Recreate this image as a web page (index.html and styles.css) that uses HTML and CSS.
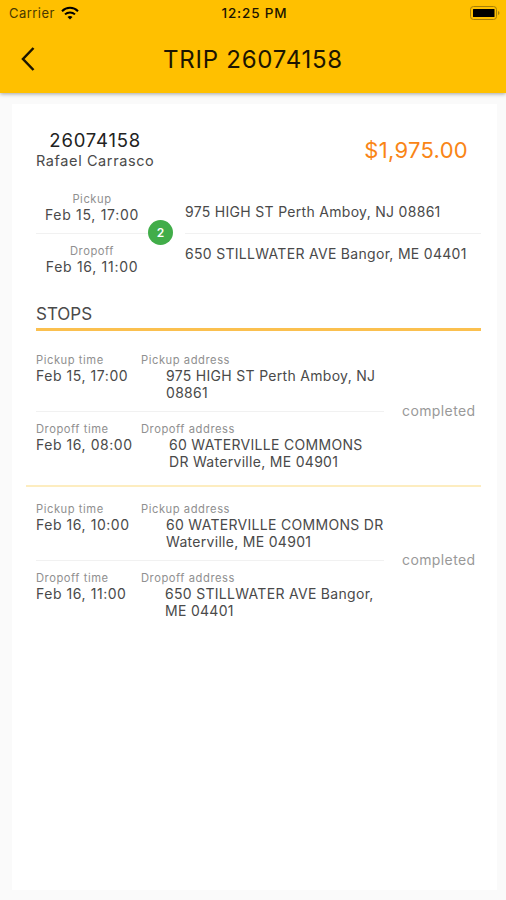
FILE: index.html
```html
<!DOCTYPE html>
<html lang="en">
<head>
  <meta charset="UTF-8" />
  <meta name="viewport" content="width=device-width, initial-scale=1.0"/>
  <title>Trip 26074158</title>
  <link rel="stylesheet" href="styles.css">
</head>
<body>
  <header>
    <div class="status-bar">
      <div class="carrier">
        <span>Carrier</span>
        <svg width="18" height="14" viewBox="0 0 18 14" fill="none" stroke="black" stroke-width="2">
          <path d="M1 5.2C5.4.7 12.6.7 17 5.2"/>
          <path d="M4 8.400c2.800-2.700 7.200-2.700 10 0"/>
          <path d="M9 13.400 6.500 10.900c1.400-1.300 3.600-1.300 5 0z" fill="black" stroke="none"/>
        </svg>
      </div>
      <span class="clock">12:25 PM</span>
      <svg class="battery" width="30" height="14" viewBox="0 0 30 14">
        <rect x="0.5" y="0.5" width="26" height="13" rx="3" fill="none" stroke="#a57f08"/>
        <rect x="3" y="3" width="21.5" height="8" rx="0.5" fill="black"/>
        <path d="M28 5v4c2-.8 2-3.2 0-4z" fill="#a57f08"/>
      </svg>
    </div>
    <div class="nav-bar">
      <svg class="back" width="14" height="24" viewBox="0 0 14 24" fill="none" stroke="#1c1500" stroke-width="2.5">
        <path d="M12.5 1 2 12l10.500 11"/>
      </svg>
      <h1>TRIP 26074158</h1>
    </div>
  </header>

  <main>
    <section class="summary">
      <div class="driver">
        <h2>26074158</h2>
        <p>Rafael Carrasco</p>
      </div>
      <span class="price">$1,975.00</span>
    </section>

    <section class="route">
      <div class="times">
        <div class="time">
          <span class="label">Pickup</span>
          <span class="value date">Feb 15, 17:00</span>
        </div>
        <div class="time">
          <span class="label">Dropoff</span>
          <span class="value date">Feb 16, 11:00</span>
        </div>
      </div>
      <span class="count">2</span>
      <div class="places">
        <p class="value">975 HIGH ST Perth Amboy, NJ 08861</p>
        <p class="value">650 STILLWATER AVE Bangor, ME 04401</p>
      </div>
    </section>

    <h3>STOPS</h3>

    <section class="stop">
      <div class="legs">
        <div class="leg">
          <div>
            <span class="label">Pickup time</span>
            <span class="value date">Feb 15, 17:00</span>
          </div>
          <div>
            <span class="label">Pickup address</span>
            <p class="value address">975 HIGH ST Perth Amboy, NJ<br>08861</p>
          </div>
        </div>
        <div class="leg">
          <div>
            <span class="label">Dropoff time</span>
            <span class="value date">Feb 16, 08:00</span>
          </div>
          <div>
            <span class="label">Dropoff address</span>
            <p class="value address far">60 WATERVILLE COMMONS<br>DR Waterville, ME 04901</p>
          </div>
        </div>
      </div>
      <span class="state">completed</span>
    </section>

    <section class="stop">
      <div class="legs">
        <div class="leg">
          <div>
            <span class="label">Pickup time</span>
            <span class="value date">Feb 16, 10:00</span>
          </div>
          <div>
            <span class="label">Pickup address</span>
            <p class="value address">60 WATERVILLE COMMONS DR<br>Waterville, ME 04901</p>
          </div>
        </div>
        <div class="leg">
          <div>
            <span class="label">Dropoff time</span>
            <span class="value date">Feb 16, 11:00</span>
          </div>
          <div>
            <span class="label">Dropoff address</span>
            <p class="value address near">650 STILLWATER AVE Bangor,<br>ME 04401</p>
          </div>
        </div>
      </div>
      <span class="state">completed</span>
    </section>
  </main>
</body>
</html>
```
FILE: styles.css
```css
:root {
  --amber: #ffc000;
  --text-color: #4a4a4a;
  --label-color: #909090;
  --line: #f1f1f1;
}

* {
  box-sizing: border-box;
}

body {
  margin: 0;
  height: 900px;
  display: flex;
  flex-direction: column;
  font-family: Inter, "Liberation Sans", sans-serif;
  background-color: #fafafa;
  color: var(--text-color);
  overflow: hidden;
}

h1, h2, h3, p {
  margin: 0;
  font-weight: 400;
}

header {
  height: 93px;
  background-color: var(--amber);
  box-shadow: 0 1px 4px rgba(0, 0, 0, 0.35);
}

.status-bar {
  height: 26px;
  padding: 0 6px 0 9px;
  display: grid;
  grid-template-columns: 1fr auto 1fr;
  align-items: center;
  font-size: 13px;
  color: #4a3900;
}

.carrier {
  display: flex;
  align-items: center;
  gap: 6px;
  letter-spacing: 0.45px;
}

.clock {
  font-weight: 500;
  font-size: 13.5px;
  letter-spacing: 0.85px;
  color: #1c1500;
}

.battery {
  justify-self: end;
}

.nav-bar {
  height: 66px;
  padding: 0 21px;
  display: grid;
  grid-template-columns: 14px 1fr 14px;
  align-items: center;
}

h1 {
  font-size: 24px;
  letter-spacing: 0.75px;
  text-align: center;
  color: #1c1500;
}

main {
  flex: 1;
  margin: 11px 9px 10px 12px;
  padding: 25px 16px 0 24px;
  background-color: white;
}

.summary {
  height: 63px;
  padding-right: 13px;
  display: flex;
  justify-content: space-between;
  align-items: flex-start;
}

.driver {
  text-align: center;
}

h2 {
  font-size: 18.5px;
  line-height: 22px;
  letter-spacing: 0.8px;
  color: #222;
}

.driver p {
  font-size: 14.5px;
  line-height: 20px;
  letter-spacing: 0.6px;
}

.price {
  margin-top: 7px;
  font-size: 22px;
  line-height: 28px;
  letter-spacing: 0.3px;
  color: #f98516;
}

.label, .value {
  display: block;
}

.label {
  font-size: 11.2px;
  line-height: 13px;
  letter-spacing: 0.55px;
  color: var(--label-color);
}

.value {
  font-size: 14px;
  line-height: 17px;
  letter-spacing: 0.3px;
  white-space: nowrap;
}

.date {
  letter-spacing: 0.55px;
}

.route {
  height: 82px;
  display: grid;
  grid-template-columns: 112px 25px 1fr;
  align-items: center;
}

.time {
  height: 41px;
  padding-top: 1px;
  text-align: center;
}

.time + .time {
  padding-top: 11px;
  border-top: 1px solid var(--line);
}

.time .date {
  letter-spacing: 0.7px;
}

.count {
  width: 25px;
  height: 25px;
  margin-bottom: 2px;
  border-radius: 50%;
  background-color: #41ad49;
  color: white;
  font-size: 12px;
  font-weight: 600;
  line-height: 25px;
  text-align: center;
}

.places {
  padding-left: 12px;
}

.places p {
  height: 41px;
  padding-top: 11px;
}

.places p + p {
  border-top: 1px solid var(--line);
}

h3 {
  height: 57px;
  padding-top: 30px;
  border-bottom: 3px solid #fbc04f;
  font-size: 17px;
  line-height: 20px;
}

.stop {
  height: 154px;
  padding-top: 23px;
  display: flex;
  align-items: flex-start;
}

.legs {
  width: 348px;
}

.leg {
  height: 57px;
  display: grid;
  grid-template-columns: 105px 1fr;
}

.leg + .leg {
  height: 60px;
  padding-top: 11px;
  border-top: 1px solid var(--line);
}

.address {
  padding-left: 25px;
}

.address.far {
  padding-left: 28px;
}

.address.near {
  padding-left: 24px;
}

.state {
  margin: 48px 0 0 18px;
  font-size: 14px;
  line-height: 18px;
  letter-spacing: 0.4px;
  color: #999;
}

/* divider between two stops runs a little past the text on the left */
.stop + .stop {
  height: 149px;
  margin-left: -10px;
  padding: 16px 0 0 10px;
  border-top: 2px solid #fdedc0;
}
```
